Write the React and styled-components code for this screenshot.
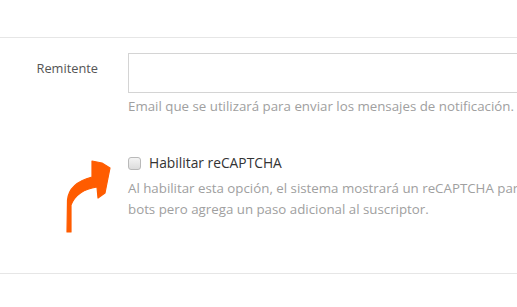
import styled, { createGlobalStyle } from "styled-components";

const Global = createGlobalStyle`
    html, body {
        margin:0;
        padding:0;
        background:#fff;
        overflow:hidden;
    }
    body {
        font-family:"Open Sans", Lato, sans-serif;
    }
`

const ArrowIcon = () => (
    <svg width="65" height="90" viewBox="0 0 65 90">
        <path
            d="M12 82 L12.5 50 Q14 33 37 27 L37 11 L47 13 L55 18 L50 43 L43 48 L42 37 Q22 40 16 55 L16 82 Z"
            fill="#ff5c00"
            stroke="#ff5c00"
            strokeWidth="1.2"
            strokeLinejoin="round"
        />
    </svg>
)

const App = () => {
    return (
        <Page>
            <Global />
            <Divider $top={37} />
            <Row>
                <Label>Remitente</Label>
                <Field>
                    <Input type="text" />
                    <Help>Email que se utilizará para enviar los mensajes de notificación.</Help>
                </Field>
            </Row>
            <CheckRow>
                <Label />
                <Field>
                    <CheckLabel>
                        <Box type="checkbox" />
                        Habilitar reCAPTCHA
                    </CheckLabel>
                    <Help $lh={21} $mt={5}>
                        Al habilitar esta opción, el sistema mostrará un reCAPTCHA para evitar<br />
                        bots pero agrega un paso adicional al suscriptor.
                    </Help>
                </Field>
            </CheckRow>
            <Divider $top={53} />
            <Arrow>
                <ArrowIcon />
            </Arrow>
        </Page>
    )
}

export default App;

const Page = styled.div`
    position:relative;
    display:flow-root;
    width:900px;
    height:307px;
    background:#fff;
`

const Divider = styled.div`
    margin-top:${p => p.$top}px;
    border-top:1px solid #e6e6e6;
`

const Row = styled.div`
    display:flex;
    margin-top:15px;
`

const CheckRow = styled.div`
    display:flex;
    margin-top:38px;
`

const Label = styled.div`
    width:113px;
    flex:none;
    box-sizing:border-box;
    padding-right:15px;
    padding-top:6px;
    text-align:right;
    font-size:12.8px;
    color:#555;
`

const Field = styled.div`
    flex:1;
    padding-left:15px;
`

const Input = styled.input`
    display:block;
    box-sizing:border-box;
    width:600px;
    height:40px;
    border:1px solid #d4d4d4;
    border-radius:0;
    outline:none;
    background:#fff;
`

const Help = styled.div`
    margin-top:${p => p.$mt ?? 4}px;
    font-size:13.3px;
    line-height:${p => p.$lh ?? 18}px;
    color:#a0a0a0;
    white-space:nowrap;
`

const CheckLabel = styled.label`
    display:flex;
    align-items:center;
    gap:8px;
    font-size:13.8px;
    line-height:20px;
    color:#333;
`

const Box = styled.input`
    appearance:none;
    margin:0;
    width:13px;
    height:13px;
    border:1px solid #b9b9b9;
    border-radius:3px;
    background:linear-gradient(#f4f4f4, #dcdcdc);
    box-sizing:border-box;
`

const Arrow = styled.div`
    position:absolute;
    left:55px;
    top:150px;
    width:65px;
    height:90px;
`
